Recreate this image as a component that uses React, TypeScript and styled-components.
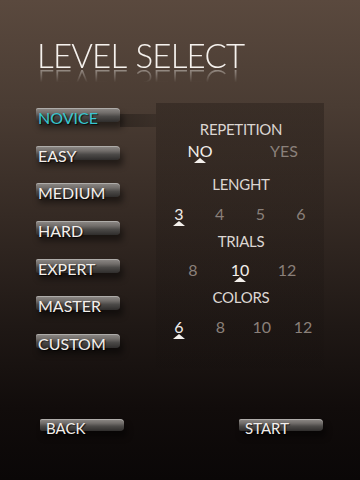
import React, { useState } from "react";
import styled, { createGlobalStyle } from "styled-components";

const GlobalStyle = createGlobalStyle`
  html, body {
    margin: 0;
    padding: 0;
    background: #0a0707;
  }
`;

const Page = styled.div`
  width: 360px;
  height: 480px;
  display: flex;
  flex-direction: column;
  overflow: hidden;
  font-family: Lato, "Liberation Sans", sans-serif;
  background: linear-gradient(
    to bottom,
    #5a493e 0%,
    #4a3c33 22%,
    #352a24 45%,
    #1f1815 68%,
    #110c0b 85%,
    #0a0707 100%
  );
`;

const TitleWrap = styled.div`
  padding: 39px 0 0 37px;
`;

const Title = styled.h1`
  display: inline-block;
  margin: 0;
  font-size: 33px;
  font-weight: 300;
  line-height: 1;
  color: #f6f2ee;
  letter-spacing: -0.8px;
  word-spacing: 2px;
  -webkit-box-reflect: below -6px
    linear-gradient(to bottom, transparent 50%, rgba(255, 255, 255, 0.55));
`;

const Body = styled.div`
  display: flex;
  gap: 36px;
  margin-top: 31px;
  padding-left: 36px;
`;

const LevelList = styled.div`
  display: flex;
  flex-direction: column;
  gap: 23.7px;
  padding-top: 5px;
`;

const Bar = styled.button<{ $active?: boolean; $small?: boolean }>`
  position: relative;
  width: 84px;
  height: ${(p) => (p.$small ? 12 : 14)}px;
  padding: 0 0 0 ${(p) => (p.$small ? 6 : 2)}px;
  border: none;
  border-radius: 2px 4px 4px 2px;
  text-align: left;
  cursor: pointer;
  overflow: visible;
  background: linear-gradient(
    to bottom,
    #8f8b88 0%,
    #716d6a 35%,
    #4c4a48 60%,
    #2f2d2c 100%
  );
  box-shadow: 3px 6px 6px rgba(0, 0, 0, 0.45),
    inset 0 1px 0 rgba(255, 255, 255, 0.3);
  font-family: inherit;

  ${(p) =>
    p.$active &&
    `
    &::after {
      content: "";
      position: absolute;
      left: 100%;
      top: 6px;
      width: 36px;
      height: 13px;
      background: linear-gradient(to right, rgba(0,0,0,0.3), rgba(0,0,0,0.18));
    }
  `}
`;

const BarLabel = styled.span<{ $active?: boolean; $small?: boolean }>`
  display: block;
  padding-top: 3px;
  font-size: ${(p) => (p.$small ? 15 : 16)}px;
  line-height: ${(p) => (p.$small ? 12 : 14)}px;
  color: ${(p) => (p.$active ? "#38c6cf" : "#f4f0ec")};
  text-shadow: 1px 1px 1px rgba(0, 0, 0, 0.7);
  white-space: nowrap;
`;

const Panel = styled.div`
  width: 168px;
  height: 265px;
  display: flex;
  flex-direction: column;
  padding-top: 19.4px;
  box-sizing: border-box;
  background: linear-gradient(
    to bottom,
    rgba(20, 14, 11, 0.3),
    rgba(10, 7, 6, 0.12) 70%,
    rgba(10, 7, 6, 0.04)
  );
`;

const Section = styled.div<{ $top: number }>`
  display: flex;
  flex-direction: column;
  margin-top: ${(p) => p.$top}px;
`;

const Label = styled.div`
  text-align: center;
  font-size: 15px;
  line-height: 15px;
  letter-spacing: -0.3px;
  color: #dcd6d2;
  padding-left: 2px;
`;

const Options = styled.div<{ $gap: number; $pad: string }>`
  display: flex;
  justify-content: space-between;
  margin-top: ${(p) => p.$gap}px;
  padding: ${(p) => p.$pad};
`;

const Option = styled.span<{ $selected?: boolean; $w: number }>`
  position: relative;
  width: ${(p) => p.$w}px;
  text-align: center;
  font-size: 16px;
  line-height: 16px;
  cursor: pointer;
  color: ${(p) => (p.$selected ? "#f2eeea" : "#8a807a")};

  ${(p) =>
    p.$selected &&
    `
    &::after {
      content: "";
      position: absolute;
      left: 50%;
      top: 14.5px;
      margin-left: -6px;
      border-left: 6px solid transparent;
      border-right: 6px solid transparent;
      border-bottom: 5px solid #f4f0ec;
    }
  `}
`;

const Footer = styled.div`
  display: flex;
  justify-content: space-between;
  margin-top: auto;
  padding: 0 37px 49px 40px;
`;

const levels = ["NOVICE", "EASY", "MEDIUM", "HARD", "EXPERT", "MASTER", "CUSTOM"];

type Setting = {
  key: string;
  title: string;
  values: string[];
  top: number;
  gap: number;
  pad: string;
  w: number;
};

const settings: Setting[] = [
  { key: "rep", title: "REPETITION", values: ["NO", "YES"], top: 0, gap: 6, pad: "0 26px 0 30px", w: 28 },
  { key: "len", title: "LENGHT", values: ["3", "4", "5", "6"], top: 18, gap: 14, pad: "0 15px 0 15px", w: 16 },
  { key: "trials", title: "TRIALS", values: ["8", "10", "12"], top: 12, gap: 13, pad: "0 26px 0 26px", w: 22 },
  { key: "colors", title: "COLORS", values: ["6", "8", "10", "12"], top: 12, gap: 14, pad: "0 10px 0 12px", w: 22 },
];

const App = () => {
  const [level, setLevel] = useState("NOVICE");
  const [choice, setChoice] = useState<Record<string, string>>({
    rep: "NO",
    len: "3",
    trials: "10",
    colors: "6",
  });

  return (
    <Page>
      <GlobalStyle />
      <TitleWrap>
        <Title>LEVEL SELECT</Title>
      </TitleWrap>
      <Body>
        <LevelList>
          {levels.map((l) => (
            <Bar key={l} $active={l === level} onClick={() => setLevel(l)}>
              <BarLabel $active={l === level}>{l}</BarLabel>
            </Bar>
          ))}
        </LevelList>
        <Panel>
          {settings.map((s) => (
            <Section key={s.key} $top={s.top}>
              <Label>{s.title}</Label>
              <Options $gap={s.gap} $pad={s.pad}>
                {s.values.map((v) => (
                  <Option
                    key={v}
                    $w={s.w}
                    $selected={choice[s.key] === v}
                    onClick={() => setChoice((c) => ({ ...c, [s.key]: v }))}
                  >
                    {v}
                  </Option>
                ))}
              </Options>
            </Section>
          ))}
        </Panel>
      </Body>
      <Footer>
        <Bar $small>
          <BarLabel $small>BACK</BarLabel>
        </Bar>
        <Bar $small>
          <BarLabel $small>START</BarLabel>
        </Bar>
      </Footer>
    </Page>
  );
};

export default App;
